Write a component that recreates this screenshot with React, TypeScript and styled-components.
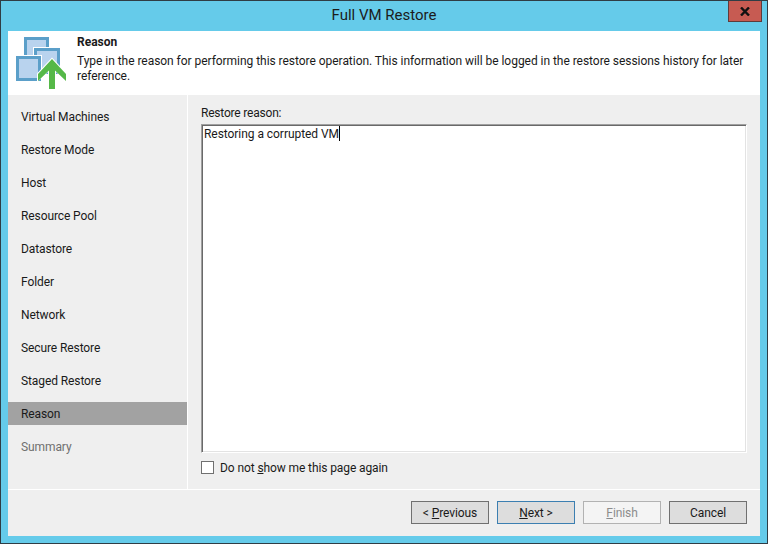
import React from "react";
import styled, { createGlobalStyle } from "styled-components";

const Global = createGlobalStyle`
  html, body { margin: 0; padding: 0; background: #65cbea; }
  * { box-sizing: border-box; }
`;

const Win = styled.div`
  width: 768px;
  height: 544px;
  background: #65cbea;
  border: 1px solid #2f3d45;
  display: flex;
  flex-direction: column;
  font-family: Roboto, "Noto Sans", sans-serif;
  font-size: 12px;
  letter-spacing: -0.1px;
  color: #1a1a1a;
  overflow: hidden;
`;

const TitleBar = styled.div`
  height: 30px;
  flex: none;
  display: grid;
  grid-template-columns: 1fr auto 1fr;
  align-items: start;
`;

const Title = styled.div`
  grid-column: 2;
  font-size: 15px;
  line-height: 29px;
  letter-spacing: 0;
  color: #1c1c1c;
`;

const Close = styled.div`
  grid-column: 3;
  justify-self: end;
  margin-right: 5px;
  margin-top: -1px;
  width: 34px;
  height: 22px;
  background: #c75b52;
  border: 1px solid #5f3b3b;
  display: flex;
  align-items: center;
  justify-content: center;
`;

const Panel = styled.div`
  flex: 1;
  margin: 0 7px 7px 7px;
  display: flex;
  flex-direction: column;
  background: #efefef;
  min-height: 0;
`;

const Header = styled.div`
  height: 64px;
  flex: none;
  background: #fff;
  display: flex;
`;

const IconBox = styled.div`
  width: 69px;
  flex: none;
`;

const HeaderText = styled.div`
  flex: 1;
  padding: 4px 14px 0 0;
  line-height: 15px;
`;

const HeaderTitle = styled.div`
  font-weight: 700;
  font-size: 12px;
  letter-spacing: 0;
  margin-bottom: 3px;
`;

const HeaderDesc = styled.div`
  font-size: 12px;
  letter-spacing: -0.04px;
  padding-top: 1px;
`;

const Main = styled.div`
  flex: 1;
  display: flex;
  min-height: 0;
  border-bottom: 1px solid #fff;
`;

const Nav = styled.div`
  width: 180px;
  flex: none;
  border-right: 1px solid #fff;
  padding-top: 10px;
  display: flex;
  flex-direction: column;
  gap: 10px;
`;

const NavItem = styled.div<{ $active?: boolean; $muted?: boolean }>`
  height: 23px;
  line-height: 25px;
  padding-left: 13px;
  background: ${(p) => (p.$active ? "#a2a2a2" : "transparent")};
  color: ${(p) => (p.$muted ? "#6f6f6f" : "#1a1a1a")};
`;

const Content = styled.div`
  flex: 1;
  padding: 9px 13px 0 13px;
  display: flex;
  flex-direction: column;
`;

const FieldLabel = styled.div`
  line-height: 18px;
  height: 20px;
  letter-spacing: -0.2px;
`;

const TextBox = styled.div`
  height: 329px;
  background: #fff;
  border-width: 1px;
  border-style: solid;
  border-color: #a0a0a0 #fff #fff #a0a0a0;
  box-shadow: inset 1px 1px 0 #696969, inset -1px -1px 0 #e3e3e3;
  padding: 1px 0 0 2px;
  line-height: 16px;
  letter-spacing: -0.05px;
`;

const Caret = styled.span`
  display: inline-block;
  width: 1px;
  height: 15px;
  background: #000;
  vertical-align: -3px;
`;

const CheckRow = styled.label`
  display: flex;
  align-items: flex-start;
  gap: 6px;
  margin-top: 8px;
  line-height: 14px;
`;

const Check = styled.span`
  width: 13px;
  height: 13px;
  background: #fff;
  border: 1px solid #707070;
  flex: none;
`;

const Footer = styled.div`
  height: 46px;
  flex: none;
  display: flex;
  justify-content: flex-end;
  gap: 8px;
  padding: 11px 13px 0 0;
`;

const Btn = styled.div<{ $focus?: boolean; $disabled?: boolean }>`
  width: 78px;
  height: 23px;
  line-height: 23px;
  text-align: center;
  border: 1px solid ${(p) => (p.$disabled ? "#b2b2b2" : p.$focus ? "#3c7fb1" : "#707070")};
  background: ${(p) => (p.$disabled ? "#f4f4f4" : "#dddddd")};
  color: ${(p) => (p.$disabled ? "#8c8c8c" : "#1a1a1a")};
`;

const steps = [
  "Virtual Machines",
  "Restore Mode",
  "Host",
  "Resource Pool",
  "Datastore",
  "Folder",
  "Network",
  "Secure Restore",
  "Staged Restore",
  "Reason",
  "Summary",
];

const RestoreIcon = () => (
  <svg width="69" height="64" viewBox="0 0 69 64" shapeRendering="crispEdges">
    <rect x="17.5" y="7.5" width="22" height="22" fill="#b9d3ee" stroke="#5b9fc9" strokeWidth="3" />
    <rect x="25" y="16" width="28" height="28" fill="#fff" />
    <rect x="27.5" y="18.5" width="23" height="23" fill="#b9d3ee" stroke="#5b9fc9" strokeWidth="3" />
    <rect x="7" y="24" width="27" height="27" fill="#fff" />
    <rect x="9.5" y="26.5" width="22" height="22" fill="#b9d3ee" stroke="#5b9fc9" strokeWidth="3" />
    <path d="M44 26.5 L59 42.5 L59 51 L48 41 L48 58 L40 58 L40 41 L29 51 L29 42.5 Z" fill="#fff" shapeRendering="auto" />
    <path d="M44 28 L58 43 L58 50 L47 39.5 L47 58 L41 58 L41 39.5 L30 50 L30 43 Z" fill="#55b848" shapeRendering="auto" />
  </svg>
);

export default function App() {
  return (
    <Win>
      <Global />
      <TitleBar>
        <Title>Full VM Restore</Title>
        <Close>
          <svg width="10" height="9" viewBox="0 0 10 9">
            <path d="M1 0.5 L9 8.5 M9 0.5 L1 8.5" stroke="#111" strokeWidth="2.4" fill="none" />
          </svg>
        </Close>
      </TitleBar>
      <Panel>
        <Header>
          <IconBox>
            <RestoreIcon />
          </IconBox>
          <HeaderText>
            <HeaderTitle>Reason</HeaderTitle>
            <HeaderDesc>
              Type in the reason for performing this restore operation. This information will be logged in the restore sessions history for later reference.
            </HeaderDesc>
          </HeaderText>
        </Header>
        <Main>
          <Nav>
            {steps.map((s) => (
              <NavItem key={s} $active={s === "Reason"} $muted={s === "Summary"}>
                {s}
              </NavItem>
            ))}
          </Nav>
          <Content>
            <FieldLabel>Restore reason:</FieldLabel>
            <TextBox>
              Restoring a corrupted VM
              <Caret />
            </TextBox>
            <CheckRow>
              <Check />
              <span>
                Do not <u>s</u>how me this page again
              </span>
            </CheckRow>
          </Content>
        </Main>
        <Footer>
          <Btn>
            &lt; <u>P</u>revious
          </Btn>
          <Btn $focus>
            <u>N</u>ext &gt;
          </Btn>
          <Btn $disabled>
            <u>F</u>inish
          </Btn>
          <Btn>Cancel</Btn>
        </Footer>
      </Panel>
    </Win>
  );
}
